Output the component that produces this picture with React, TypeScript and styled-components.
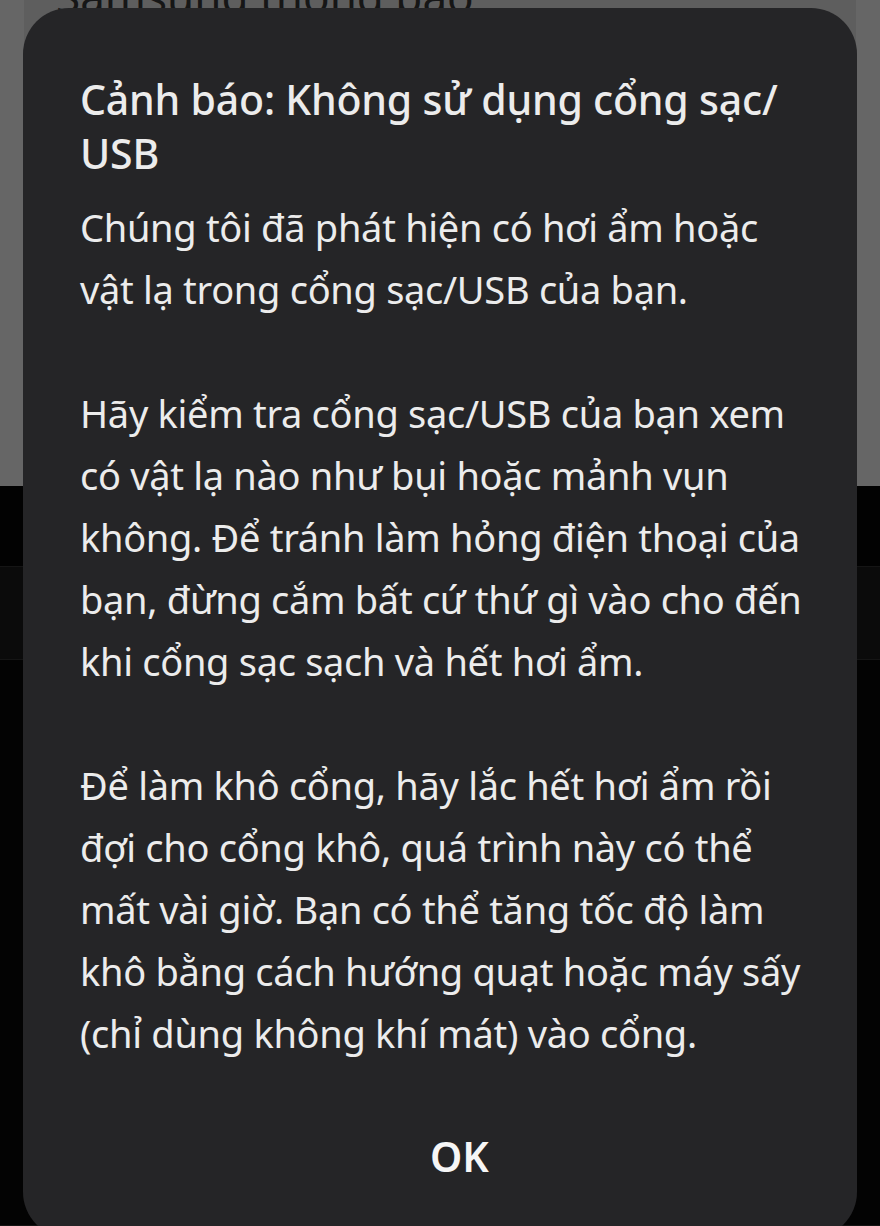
import React from 'react';
import styled, { createGlobalStyle } from 'styled-components';

const GlobalStyle = createGlobalStyle`
  html, body {
    margin: 0;
    padding: 0;
    background: #000;
  }
  body {
    font-family: 'Noto Sans', 'Open Sans', sans-serif;
  }
`;

const Screen = styled.div`
  position: relative;
  width: 880px;
  height: 1226px;
  overflow: hidden;
  background: #030303;
`;

const Backdrop = styled.div`
  display: flex;
  flex-direction: column;
  height: 100%;
`;

const Sheet = styled.div`
  height: 487px;
  background: #5e5e5e;
  border-left: 24px solid #666;
  border-right: 24px solid #666;
  overflow: hidden;
`;

const SheetTitle = styled.div`
  margin-top: -34px;
  padding-left: 32px;
  font-size: 44px;
  color: #161616;
  white-space: nowrap;
`;

const Band = styled.div<{ $tone: string; $h: number }>`
  height: ${(p) => p.$h}px;
  background: ${(p) => p.$tone};
  border-bottom: 1px solid #151515;
`;

const Dialog = styled.div`
  position: absolute;
  top: 8px;
  left: 23px;
  right: 23px;
  bottom: -12px;
  background: #252527;
  border-radius: 46px;
  padding: 64px 30px 0 57px;
  box-sizing: border-box;
  display: flex;
  flex-direction: column;
  color: #ececec;
`;

const Title = styled.h2`
  margin: 0 0 16px;
  font-size: 41px;
  line-height: 54px;
  font-weight: 500;
  letter-spacing: -0.2px;
`;

const Body = styled.div`
  display: flex;
  flex-direction: column;
  gap: 62px;
`;

const Para = styled.p`
  margin: 0;
  font-size: 38px;
  line-height: 62px;
  letter-spacing: -0.3px;
  white-space: nowrap;
`;

const Line = styled.span`
  display: block;
`;

const Actions = styled.div`
  display: flex;
  justify-content: center;
  margin-top: 67px;
`;

const OkButton = styled.button`
  background: none;
  border: none;
  padding: 0;
  color: #f6f6f6;
  font-family: inherit;
  font-size: 41px;
  font-weight: 600;
  line-height: 50px;
  margin-left: 12px;
`;

const paragraphs: string[][] = [
  ['Chúng tôi đã phát hiện có hơi ẩm hoặc', 'vật lạ trong cổng sạc/USB của bạn.'],
  [
    'Hãy kiểm tra cổng sạc/USB của bạn xem',
    'có vật lạ nào như bụi hoặc mảnh vụn',
    'không. Để tránh làm hỏng điện thoại của',
    'bạn, đừng cắm bất cứ thứ gì vào cho đến',
    'khi cổng sạc sạch và hết hơi ẩm.',
  ],
  [
    'Để làm khô cổng, hãy lắc hết hơi ẩm rồi',
    'đợi cho cổng khô, quá trình này có thể',
    'mất vài giờ. Bạn có thể tăng tốc độ làm',
    'khô bằng cách hướng quạt hoặc máy sấy',
    '(chỉ dùng không khí mát) vào cổng.',
  ],
];

export default function App() {
  return (
    <>
      <GlobalStyle />
      <Screen>
        <Backdrop>
          <Sheet>
            <SheetTitle>Samsung thông báo</SheetTitle>
          </Sheet>
          <Band $tone="#020202" $h={80} />
          <Band $tone="#0b0b0b" $h={93} />
          <Band $tone="#030303" $h={566} />
        </Backdrop>
        <Dialog>
          <Title>
            Cảnh báo: Không sử dụng cổng sạc/
            <br />
            USB
          </Title>
          <Body>
            {paragraphs.map((lines, i) => (
              <Para key={i}>
                {lines.map((l) => (
                  <Line key={l}>{l}</Line>
                ))}
              </Para>
            ))}
          </Body>
          <Actions>
            <OkButton>OK</OkButton>
          </Actions>
        </Dialog>
      </Screen>
    </>
  );
}
